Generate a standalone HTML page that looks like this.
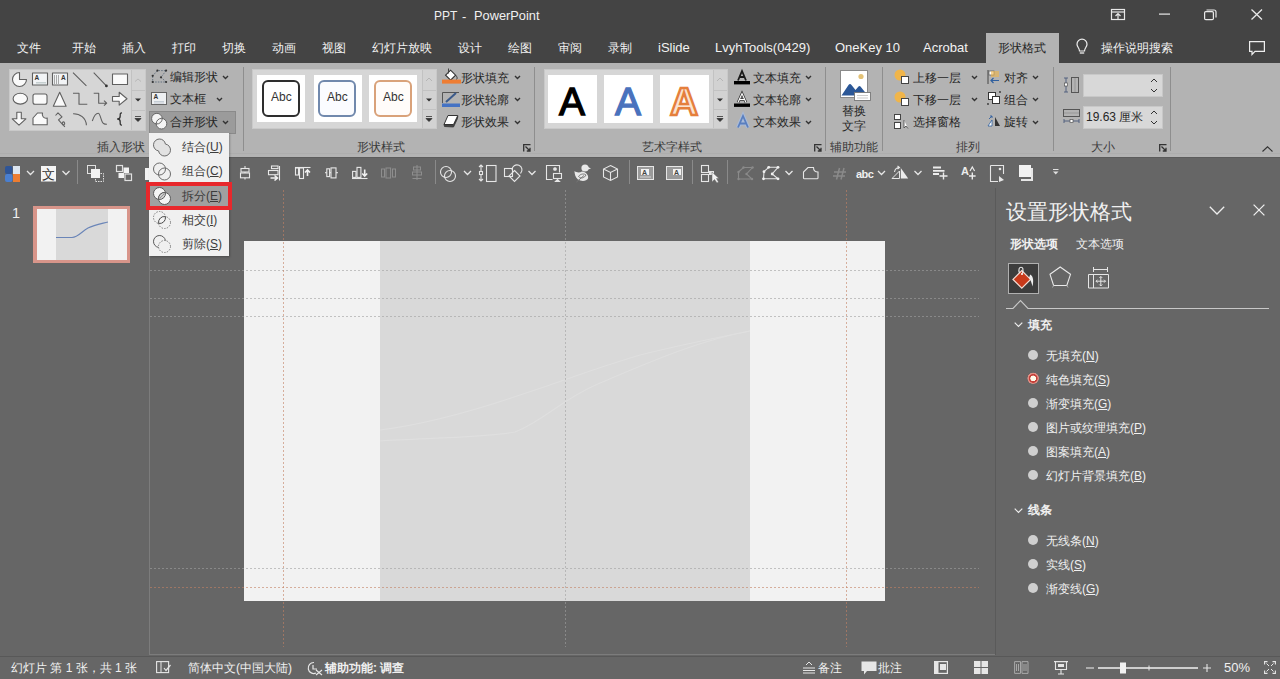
<!DOCTYPE html>
<html><head><meta charset="utf-8">
<style>
*{margin:0;padding:0;box-sizing:border-box}
html,body{width:1280px;height:679px;overflow:hidden}
body{background:#666;font-family:"Liberation Sans",sans-serif;position:relative;color:#262626}
.a{position:absolute}
.t{position:absolute;white-space:nowrap;line-height:1}
svg{position:absolute;overflow:visible}
svg text{font-family:"Liberation Sans",sans-serif}
.tab{position:absolute;top:41px;color:#f2f2f2;font-size:12px;white-space:nowrap;line-height:14px}
.tl{font-size:13px}
.rt{position:absolute;font-size:12px;line-height:12px;color:#262626;white-space:nowrap}
.gl{position:absolute;font-size:12px;line-height:12px;color:#3a3a3a;white-space:nowrap;top:141px}
.sep{position:absolute;width:1px;background:#8e8e8e}
.gal{position:absolute;background:#d6d6d6;border:1px solid #c9c9c9}
.scr{position:absolute;background:#d2d2d2;border-left:1px solid #c2c2c2}
.tile{position:absolute;background:#fff}
.mi{position:absolute;left:182px;font-size:12px;line-height:12px;color:#3c3c3c;white-space:nowrap}
.pt{position:absolute;color:#f0f0f0;font-size:12px;line-height:12px;white-space:nowrap}
.rd{position:absolute;width:10px;height:10px;border-radius:50%;background:#cfcfcf}
.st{position:absolute;top:662px;color:#f0f0f0;font-size:12px;line-height:12px;white-space:nowrap}
</style></head><body>
<!-- title bar + tabs -->
<div class="a" style="left:0;top:0;width:1280px;height:63px;background:#444"></div>
<div class="t" style="left:434px;top:10px;font-size:12px;color:#f0f0f0">PPT</div><div class="t" style="left:462px;top:10px;font-size:13px;color:#f0f0f0">-</div><div class="t" style="left:474px;top:10px;font-size:12.8px;color:#f0f0f0">PowerPoint</div>
<svg style="left:1111px;top:9px" width="14" height="11"><rect x="0.5" y="0.5" width="13" height="10" fill="none" stroke="#e8e8e8" stroke-width="1.2"/><line x1="1" y1="3" x2="13" y2="3" stroke="#e8e8e8" stroke-width="1.2"/><path d="M4.5 7 L7 4.5 L9.5 7 M7 4.5 V10" stroke="#e8e8e8" fill="none" stroke-width="1.2"/></svg>
<svg style="left:1159px;top:13px" width="12" height="2"><rect x="0" y="0.5" width="11" height="1.2" fill="#e8e8e8"/></svg>
<svg style="left:1204px;top:9px" width="13" height="11"><rect x="0.6" y="2.6" width="8.8" height="8" rx="1.2" fill="none" stroke="#e8e8e8" stroke-width="1.2"/><path d="M2.5 1 H10 a2 2 0 0 1 2 2 V8.5" fill="none" stroke="#e8e8e8" stroke-width="1.2"/></svg>
<svg style="left:1251px;top:9px" width="12" height="11"><path d="M0.5 0.5 L11 10.5 M11 0.5 L0.5 10.5" stroke="#e8e8e8" stroke-width="1.3"/></svg>
<div class="tab" style="left:17px">文件</div>
<div class="tab" style="left:72px">开始</div>
<div class="tab" style="left:122px">插入</div>
<div class="tab" style="left:172px">打印</div>
<div class="tab" style="left:222px">切换</div>
<div class="tab" style="left:272px">动画</div>
<div class="tab" style="left:322px">视图</div>
<div class="tab" style="left:372px">幻灯片放映</div>
<div class="tab" style="left:458px">设计</div>
<div class="tab" style="left:508px">绘图</div>
<div class="tab" style="left:558px">审阅</div>
<div class="tab" style="left:608px">录制</div>
<div class="tab tl" style="left:658px">iSlide</div>
<div class="tab tl" style="left:715px">LvyhTools(0429)</div>
<div class="tab tl" style="left:835px">OneKey 10</div>
<div class="tab tl" style="left:923px">Acrobat</div>
<div class="a" style="left:986px;top:33px;width:73px;height:30px;background:#b3b3b3"></div>
<div class="tab" style="left:998px;color:#262626">形状格式</div>
<svg style="left:1076px;top:39px" width="12" height="17"><path d="M3.5 12 C3.5 9 1 8 1 5.2 A5 5 0 0 1 11 5.2 C11 8 8.5 9 8.5 12 Z" fill="none" stroke="#eee" stroke-width="1.2"/><line x1="3.8" y1="14" x2="8.2" y2="14" stroke="#eee" stroke-width="1.3"/></svg>
<div class="tab" style="left:1101px">操作说明搜索</div>
<svg style="left:1249px;top:41px" width="17" height="15"><path d="M0.6 0.6 H15.4 V10.4 H6 L3 13.5 V10.4 H0.6 Z" fill="none" stroke="#eee" stroke-width="1.2"/></svg>
<!-- ribbon -->
<div class="a" style="left:0;top:63px;width:1280px;height:94px;background:#b3b3b3"></div>
<div class="a" style="left:0;top:153px;width:1280px;height:1px;background:#adadad"></div>
<!-- gallery: insert shapes -->
<div class="gal" style="left:9px;top:69px;width:137px;height:62px"></div>
<div class="scr" style="left:131px;top:70px;width:14px;height:60px"></div>
<div class="a" style="left:131px;top:90px;width:14px;height:1px;background:#c2c2c2"></div>
<div class="a" style="left:131px;top:110px;width:14px;height:1px;background:#c2c2c2"></div>
<svg style="left:0;top:0" width="150" height="140">
 <g fill="#fafafa" stroke="#606060" stroke-width="1.1" stroke-linejoin="round">
  <path d="M19.5 79.5 V72.5 A7 7 0 1 0 26.5 79.5 Z"/>
  <rect x="32.5" y="73" width="15" height="12" fill="#f2f4f6"/>
  <rect x="52.5" y="73" width="15" height="12" fill="#f2f4f6"/>
  <path d="M73 72.7 L86.4 85.9 M93.7 72.7 L106.4 85.9" fill="none"/>
  <rect x="112.5" y="74" width="15" height="10.5"/>
  <ellipse cx="20.3" cy="98.7" rx="7.2" ry="5.4"/>
  <rect x="33" y="94" width="14" height="10.3" rx="2"/>
  <path d="M59.7 92.3 L53.3 106.2 L66.1 106.2 Z"/>
  <path d="M73 93.2 H79 V104.2 H87.3" fill="none"/>
  <path d="M93.7 93.2 H98.7 V103.2 H106.5 M104 100.7 L106.7 103.2 L104 105.7" fill="none"/>
  <path d="M112.5 96.5 H119.2 V92.3 L127 98.7 L119.2 105.1 V101.2 H112.5 Z"/>
  <path d="M16.8 112.2 H21.3 V118.8 H25.9 L19 125.2 L12.2 118.8 H16.8 Z"/>
  <path d="M33 118 L37.5 113 H42.5 C41.5 116 44 119 47.2 118 V124.7 H33 Z"/>
  <path d="M55.5 115.5 L58 112.8 L62 116.8 L58.5 119.8 L62.5 124.5 C63.5 125.5 65.3 124.5 64.5 122.7 C63.7 121.2 61.7 122 62.5 123.8 L64.8 126.8" fill="none"/>
  <path d="M73.1 113.7 C80 113.5 86 118 86.4 125.2" fill="none"/>
  <path d="M92.3 121 C94 116 96 113.3 98.2 113.3 C100.5 113.3 101 122 103.5 123.5 C104.5 124.2 105.5 124.3 106.9 124.3" fill="none"/>
  <path d="M122 112.8 C120 112.8 120.2 114 120.2 116 C120.2 118 119.7 119 117.6 119 C119.7 119 120.2 120 120.2 122 C120.2 124 120 125.2 122 125.2" fill="none" stroke="#333" stroke-width="1.3"/>
 </g>
 <circle cx="106.4" cy="85.9" r="1.4" fill="#333"/>
 <g fill="#333" font-family="Liberation Sans" font-size="6.5" font-weight="bold"><text x="34.5" y="80">A</text><text x="61" y="80">A</text></g>
 <path d="M36 82.5 H46 M36 84 H46" stroke="#9aa" stroke-width="0.5"/>
 <path d="M54.5 75 V84 M56.5 75 V84 M58.5 75 V84" stroke="#777" stroke-width="0.6"/>
 <path d="M135 81.5 L138 79 L141 81.5" fill="none" stroke="#b8b8b8" stroke-width="1"/>
 <path d="M135 98.5 H141 L138 101.5 Z" fill="#333"/>
 <path d="M135 116.5 H141 M135 118.5 H141 L138 121.5 Z" fill="#333" stroke="#333" stroke-width="0.8"/>
</svg>
<div class="gl" style="left:97px">插入形状</div>
<!-- edit shape buttons -->
<svg style="left:145px;top:66px" width="24" height="20"><path d="M7.7 9.8 L12.4 4.6 H21.1 L16 11.3 L21.1 16 H7.7 Z" fill="none" stroke="#5a6a7a" stroke-width="0.9" stroke-dasharray="1.5 1.2"/><g fill="#333"><circle cx="7.7" cy="9.8" r="1.1"/><circle cx="12.4" cy="4.6" r="1.1"/><circle cx="21.1" cy="4.6" r="1.1"/><circle cx="16" cy="11.3" r="1.1"/><circle cx="21.1" cy="16" r="1.1"/><circle cx="7.7" cy="16" r="1.1"/></g></svg>
<div class="rt" style="left:170px;top:71px">编辑形状</div>
<svg style="left:222px;top:75px" width="7" height="5"><path d="M1 1 L3.5 3.5 L6 1" fill="none" stroke="#333" stroke-width="1.4"/></svg>
<svg style="left:151px;top:92px" width="16" height="13"><rect x="0.5" y="0.5" width="15" height="12" fill="#eef0f2" stroke="#666"/><text x="2.5" y="7" font-family="Liberation Sans" font-size="6.5" font-weight="bold" fill="#333">A</text><path d="M3 9.5 H13 M3 11 H13" stroke="#a8b4c0" stroke-width="0.6"/></svg>
<div class="rt" style="left:170px;top:93px">文本框</div>
<svg style="left:216px;top:97px" width="7" height="5"><path d="M1 1 L3.5 3.5 L6 1" fill="none" stroke="#333" stroke-width="1.4"/></svg>
<div class="a" style="left:149px;top:111px;width:87px;height:23px;background:#9b9b9b;border:1px solid #8a8a8a"></div>
<svg style="left:150px;top:111px" width="19" height="19"><circle cx="6.9" cy="7.6" r="5.3" fill="#f4f4f4" stroke="#666" stroke-width="1"/><circle cx="11.5" cy="12.7" r="5.3" fill="#f4f4f4" stroke="#666" stroke-width="1"/><path d="M12.2 7.4 A5.3 5.3 0 0 1 6.2 12.9" fill="none" stroke="#666" stroke-width="1"/></svg>
<div class="rt" style="left:170px;top:116px">合并形状</div>
<svg style="left:222px;top:120px" width="7" height="5"><path d="M1 1 L3.5 3.5 L6 1" fill="none" stroke="#333" stroke-width="1.4"/></svg>
<div class="sep" style="left:243px;top:67px;height:84px"></div>
<!-- shape styles -->
<div class="gal" style="left:252px;top:69px;width:185px;height:60px"></div>
<div class="scr" style="left:422px;top:70px;width:14px;height:58px"></div>
<div class="a" style="left:422px;top:90px;width:14px;height:1px;background:#c2c2c2"></div>
<div class="a" style="left:422px;top:109px;width:14px;height:1px;background:#c2c2c2"></div>
<div class="tile" style="left:257px;top:75px;width:48px;height:47px"></div>
<div class="tile" style="left:314px;top:75px;width:48px;height:47px"></div>
<div class="tile" style="left:369px;top:75px;width:48px;height:47px"></div>
<div class="a" style="left:262px;top:80px;width:38px;height:37px;border:2px solid #2e2e2e;border-radius:6px;background:#fff"></div>
<div class="a" style="left:318px;top:80px;width:38px;height:37px;border:2px solid #7189ad;border-radius:6px;background:#fbfcff"></div>
<div class="a" style="left:374px;top:80px;width:38px;height:37px;border:2px solid #d9a27a;border-radius:6px;background:#fffcfa"></div>
<div class="t" style="left:271px;top:91px;font-size:12px;color:#333">Abc</div>
<div class="t" style="left:327px;top:91px;font-size:12px;color:#333">Abc</div>
<div class="t" style="left:383px;top:91px;font-size:12px;color:#333">Abc</div>
<svg style="left:422px;top:69px" width="14" height="60"><path d="M4 12 L7 9 L10 12" fill="none" stroke="#b5b5b5" stroke-width="1"/><path d="M4 29.5 H10 L7 32.5 Z" fill="#333"/><path d="M4 47.5 H10 M4 49.5 H10 L7 52.5 Z" fill="#333" stroke="#333" stroke-width="0.8"/></svg>
<svg style="left:441px;top:68px" width="20" height="18"><path d="M4.6 7.2 L9.6 2.2 L14.6 7.2 L9.6 12.2 Z" fill="#fff" stroke="#333" stroke-width="1.1"/><path d="M7.5 0.5 V5.5" stroke="#444" stroke-width="1"/><path d="M14.6 7.2 C16.3 8.8 16.5 10.5 15.5 11.5" fill="none" stroke="#333"/><rect x="1" y="11.6" width="19" height="4" fill="#ee7d33"/></svg>
<div class="rt" style="left:461px;top:72px">形状填充</div>
<svg style="left:514px;top:75px" width="7" height="5"><path d="M1 1 L3.5 3.5 L6 1" fill="none" stroke="#333" stroke-width="1.4"/></svg>
<svg style="left:441px;top:91px" width="20" height="17"><path d="M1.5 12 V1.5 H18" fill="none" stroke="#555" stroke-width="1"/><path d="M5 11 L15 2" stroke="#3b5a8a" stroke-width="2"/><rect x="1" y="12.5" width="18" height="3.5" fill="#4472c4"/></svg>
<div class="rt" style="left:461px;top:94px">形状轮廓</div>
<svg style="left:514px;top:97px" width="7" height="5"><path d="M1 1 L3.5 3.5 L6 1" fill="none" stroke="#333" stroke-width="1.4"/></svg>
<svg style="left:442px;top:114px" width="18" height="15"><path d="M2 10.5 L2.5 12.5 L11.5 13 L15.5 4.5 L15.8 2 L11.5 10.5 Z" fill="#444" stroke="#333" stroke-width="0.8"/><path d="M2 10.5 L6 1.5 H15.8 L11.5 10.5 Z" fill="#fff" stroke="#333" stroke-width="1"/></svg>
<div class="rt" style="left:461px;top:116px">形状效果</div>
<svg style="left:514px;top:120px" width="7" height="5"><path d="M1 1 L3.5 3.5 L6 1" fill="none" stroke="#333" stroke-width="1.4"/></svg>
<div class="gl" style="left:357px">形状样式</div>
<svg style="left:523px;top:144px" width="8" height="8"><path d="M0.7 7.5 V0.7 H7.5" fill="none" stroke="#333" stroke-width="1.3"/><path d="M2.5 2.5 L7 7 M3.8 7 H7 V3.8" fill="none" stroke="#333" stroke-width="1.3"/></svg>
<div class="sep" style="left:534px;top:67px;height:84px"></div>
<!-- wordart styles -->
<div class="gal" style="left:544px;top:69px;width:184px;height:60px"></div>
<div class="scr" style="left:713px;top:70px;width:14px;height:58px"></div>
<div class="a" style="left:713px;top:90px;width:14px;height:1px;background:#c2c2c2"></div>
<div class="a" style="left:713px;top:109px;width:14px;height:1px;background:#c2c2c2"></div>
<svg style="left:713px;top:69px" width="14" height="60"><path d="M4 12 L7 9 L10 12" fill="none" stroke="#b5b5b5" stroke-width="1"/><path d="M4 29.5 H10 L7 32.5 Z" fill="#333"/><path d="M4 47.5 H10 M4 49.5 H10 L7 52.5 Z" fill="#333" stroke="#333" stroke-width="0.8"/></svg>
<div class="tile" style="left:548px;top:75px;width:49px;height:48px"></div>
<div class="tile" style="left:604px;top:75px;width:49px;height:48px"></div>
<div class="tile" style="left:660px;top:75px;width:49px;height:48px"></div>
<svg style="left:548px;top:75px" width="162" height="48">
 <text x="24" y="39.5" text-anchor="middle" font-family="Liberation Sans" font-size="39" fill="#000" stroke="#000" stroke-width="1.3">A</text>
 <text x="80" y="39.5" text-anchor="middle" font-family="Liberation Sans" font-size="39" fill="#4a72bd" stroke="#4a72bd" stroke-width="1.3">A</text>
 <text x="136" y="39.5" text-anchor="middle" font-family="Liberation Sans" font-size="39" font-weight="bold" fill="#fbe3cf" stroke="#e57f3c" stroke-width="2.4">A</text>
</svg>
<svg style="left:734px;top:70px" width="17" height="15"><path d="M4 10.5 L8 1 L12 10.5 M5.5 7 H10.5" fill="none" stroke="#1a1a1a" stroke-width="1.8"/><rect x="0" y="11" width="16" height="3.4" fill="#000"/></svg>
<div class="rt" style="left:753px;top:72px">文本填充</div>
<svg style="left:805px;top:75px" width="7" height="5"><path d="M1 1 L3.5 3.5 L6 1" fill="none" stroke="#333" stroke-width="1.4"/></svg>
<svg style="left:734px;top:92px" width="17" height="15"><path d="M4 10.5 L8 1.5 L12 10.5 M5.5 7.5 H10.5" fill="none" stroke="#333" stroke-width="2.6"/><path d="M4 10.5 L8 1.5 L12 10.5 M5.5 7.5 H10.5" fill="none" stroke="#fff" stroke-width="1.1"/><rect x="0" y="11.5" width="16" height="3.4" fill="#000"/></svg>
<div class="rt" style="left:753px;top:94px">文本轮廓</div>
<svg style="left:805px;top:97px" width="7" height="5"><path d="M1 1 L3.5 3.5 L6 1" fill="none" stroke="#333" stroke-width="1.4"/></svg>
<svg style="left:735px;top:115px" width="16" height="14"><path d="M3 12.5 L8 1 L13 12.5 M5 8.5 H11" fill="none" stroke="#a9bbd9" stroke-width="4"/><path d="M3 12.5 L8 1 L13 12.5 M5 8.5 H11" fill="none" stroke="#5a7fbf" stroke-width="1.8"/></svg>
<div class="rt" style="left:753px;top:116px">文本效果</div>
<svg style="left:805px;top:120px" width="7" height="5"><path d="M1 1 L3.5 3.5 L6 1" fill="none" stroke="#333" stroke-width="1.4"/></svg>
<div class="gl" style="left:642px">艺术字样式</div>
<svg style="left:814px;top:144px" width="8" height="8"><path d="M0.7 7.5 V0.7 H7.5" fill="none" stroke="#333" stroke-width="1.3"/><path d="M2.5 2.5 L7 7 M3.8 7 H7 V3.8" fill="none" stroke="#333" stroke-width="1.3"/></svg>
<div class="sep" style="left:825px;top:67px;height:84px"></div>
<!-- alt text -->
<svg style="left:840px;top:70px" width="31" height="31"><rect x="0.5" y="0.5" width="27" height="27" fill="#fff" stroke="#8a8a8a"/><circle cx="21" cy="6.5" r="2.6" fill="#e3c277"/><path d="M1.5 25.5 L8.5 15 Q10 13 11.5 15 L15.5 20 L18.5 16.5 Q19.5 15.5 20.5 16.5 L26.5 24 V25.5 Z" fill="#2b5797"/><rect x="14.5" y="22.5" width="16" height="8" fill="#fff" stroke="#777" stroke-width="0.9"/><path d="M17 25.5 H28 M17 28 H28" stroke="#aaa" stroke-width="0.6"/></svg>
<div class="rt" style="left:842px;top:105px">替换</div>
<div class="rt" style="left:842px;top:120px">文字</div>
<div class="gl" style="left:830px">辅助功能</div>
<div class="sep" style="left:882px;top:67px;height:84px"></div>
<!-- arrange -->
<svg style="left:894px;top:69px" width="16" height="16"><circle cx="6" cy="6" r="5.5" fill="#f0b54a"/><rect x="7.5" y="7.5" width="7" height="7" fill="#fff" stroke="#444"/></svg>
<div class="rt" style="left:913px;top:72px">上移一层</div>
<svg style="left:971px;top:75px" width="7" height="5"><path d="M1 1 L3.5 3.5 L6 1" fill="none" stroke="#333" stroke-width="1.4"/></svg>
<svg style="left:894px;top:91px" width="16" height="16"><circle cx="6" cy="6" r="5.5" fill="#f0b54a"/><rect x="7.5" y="7.5" width="7" height="7" fill="#fff" stroke="#444"/></svg>
<div class="rt" style="left:913px;top:94px">下移一层</div>
<svg style="left:971px;top:97px" width="7" height="5"><path d="M1 1 L3.5 3.5 L6 1" fill="none" stroke="#333" stroke-width="1.4"/></svg>
<svg style="left:894px;top:114px" width="16" height="15"><rect x="0.5" y="0.5" width="6" height="5" fill="#fff" stroke="#444"/><rect x="0.5" y="8.5" width="6" height="6" fill="#fff" stroke="#444"/><path d="M10 6 V14 L12 12 L14 14.5" fill="#fff" stroke="#444" stroke-width="0.8"/></svg>
<div class="rt" style="left:913px;top:116px">选择窗格</div>
<svg style="left:987px;top:69px" width="13" height="16"><path d="M1 1 V15" stroke="#444"/><rect x="2" y="2" width="5" height="4" fill="#fff" stroke="#555" stroke-width="0.7"/><rect x="4" y="2" width="8" height="6" fill="#f0b54a" opacity="0.6"/><path d="M12 11.5 H4 M6.5 9 L4 11.5 L6.5 14" fill="none" stroke="#2f5f9e" stroke-width="1.2"/></svg>
<div class="rt" style="left:1004px;top:72px">对齐</div>
<svg style="left:1032px;top:75px" width="7" height="5"><path d="M1 1 L3.5 3.5 L6 1" fill="none" stroke="#333" stroke-width="1.4"/></svg>
<svg style="left:987px;top:91px" width="14" height="14"><rect x="1.5" y="1.5" width="7" height="7" fill="#fff" stroke="#333"/><rect x="5.5" y="5.5" width="7" height="7" fill="#fff" stroke="#333"/><g fill="#333"><circle cx="1" cy="13" r="0.9"/><circle cx="13" cy="1" r="0.9"/></g></svg>
<div class="rt" style="left:1004px;top:94px">组合</div>
<svg style="left:1032px;top:97px" width="7" height="5"><path d="M1 1 L3.5 3.5 L6 1" fill="none" stroke="#333" stroke-width="1.4"/></svg>
<svg style="left:987px;top:115px" width="14" height="12"><path d="M1 11 L5 5 V11 Z" fill="#fff" stroke="#2f5f9e" stroke-width="0.8"/><path d="M8 11 L8 2 L13 11 Z" fill="#333"/><path d="M2 4 L5 1 M3 1 H5 V3" fill="none" stroke="#2f5f9e" stroke-width="0.9"/></svg>
<div class="rt" style="left:1004px;top:116px">旋转</div>
<svg style="left:1032px;top:120px" width="7" height="5"><path d="M1 1 L3.5 3.5 L6 1" fill="none" stroke="#333" stroke-width="1.4"/></svg>
<div class="gl" style="left:956px">排列</div>
<div class="sep" style="left:1053px;top:67px;height:84px"></div>
<!-- size -->
<svg style="left:1063px;top:77px" width="17" height="16"><path d="M3 1 V15 M1 1 H5 M1 15 H5" stroke="#4a5a7a" stroke-width="0.9"/><rect x="1.5" y="6" width="3" height="3" fill="#fff" stroke="#555" stroke-width="0.7"/><rect x="8.5" y="0.5" width="7" height="15" fill="none" stroke="#555"/><path d="M12 1 V15" stroke="#888" stroke-width="0.6"/></svg>
<div class="a" style="left:1083px;top:74px;width:80px;height:23px;background:#d8d8d8;border:1px solid #c8c8c8"></div>
<svg style="left:1150px;top:78px" width="8" height="15"><path d="M1 4 L4 1 L7 4 M1 11 L4 14 L7 11" fill="none" stroke="#333" stroke-width="1"/></svg>
<svg style="left:1063px;top:109px" width="17" height="15"><rect x="0.5" y="0.5" width="16" height="7" fill="none" stroke="#555"/><path d="M1 4 H16" stroke="#888" stroke-width="0.6"/><path d="M1 12 H16 M1 10 V14 M16 10 V14" stroke="#4a5a7a" stroke-width="0.9"/><rect x="7" y="10.5" width="3" height="3" fill="#fff" stroke="#555" stroke-width="0.7"/></svg>
<div class="a" style="left:1083px;top:106px;width:80px;height:23px;background:#d8d8d8;border:1px solid #c8c8c8"></div>
<div class="t" style="left:1086px;top:111px;font-size:12px;color:#262626">19.63 厘米</div>
<svg style="left:1150px;top:110px" width="8" height="15"><path d="M1 4 L4 1 L7 4 M1 11 L4 14 L7 11" fill="none" stroke="#333" stroke-width="1"/></svg>
<div class="gl" style="left:1091px">大小</div>
<svg style="left:1159px;top:144px" width="8" height="8"><path d="M0.7 7.5 V0.7 H7.5" fill="none" stroke="#333" stroke-width="1.3"/><path d="M2.5 2.5 L7 7 M3.8 7 H7 V3.8" fill="none" stroke="#333" stroke-width="1.3"/></svg>
<div class="sep" style="left:1170px;top:67px;height:84px"></div>
<svg style="left:1262px;top:146px" width="11" height="6"><path d="M0.5 5.5 L5.5 0.8 L10.5 5.5" fill="none" stroke="#333" stroke-width="1.1"/></svg>
<!-- quick toolbar -->
<div class="a" style="left:0;top:157px;width:1280px;height:1px;background:#5c5c5c"></div>
<svg style="left:0;top:157px" width="1280" height="31">
 <g>
  <rect x="5" y="9" width="7.5" height="8" rx="2" fill="#2f5597"/><rect x="5" y="17" width="7.5" height="8" rx="2" fill="#4a7fd0"/>
  <rect x="13" y="9" width="7" height="8" fill="#dde6f0"/><rect x="13" y="17" width="7" height="8" fill="#ed7d31"/>
 </g>
 <path d="M27 14 L30.5 17.5 L34 14" fill="none" stroke="#e6e6e6" stroke-width="1.3"/>
 <rect x="41" y="9" width="15" height="15.5" fill="#f5f5f5"/>
 <text x="48.5" y="22" text-anchor="middle" font-size="13" fill="#333">文</text>
 <path d="M62.5 14 L66 17.5 L69.5 14" fill="none" stroke="#e6e6e6" stroke-width="1.3"/>
 <rect x="77" y="3" width="1" height="24" fill="#8a8a8a"/>
 <g fill="none" stroke="#e0e0e0" stroke-width="1">
  <rect x="87.5" y="8.5" width="8" height="8"/><rect x="95.5" y="16.5" width="8" height="8" stroke-dasharray="1.5 1"/>
 </g>
 <rect x="91" y="12" width="9" height="9" fill="#f2f2f2"/>
 <g fill="none" stroke="#e0e0e0" stroke-width="1.2"><rect x="116.5" y="8.5" width="6" height="6"/><rect x="125" y="17" width="6.5" height="6.5"/></g>
 <rect x="123.5" y="10.5" width="5.5" height="5.5" fill="#f2f2f2"/><rect x="118.5" y="16" width="5.5" height="5" fill="#f2f2f2"/>
 <rect x="145" y="11" width="5" height="12" fill="#f2f2f2"/>
 <g fill="#666" stroke="#e8e8e8" stroke-width="1.1">
  <path d="M245 9 V22.5"/><rect x="241" y="11.5" width="8" height="3.5"/><rect x="240.5" y="16" width="9" height="4.8"/>
  <rect x="271.5" y="9" width="6.5" height="2.6"/><rect x="268.5" y="13.5" width="9.5" height="4.2"/><path d="M279.5 9 V23.5"/>
  <path d="M295 10.5 H310.5"/><rect x="295.5" y="11" width="3" height="7"/><rect x="299.5" y="11" width="4" height="10.5"/>
  <path d="M325 15.7 H338"/><rect x="326.8" y="11.8" width="2.8" height="7.8"/><rect x="331" y="10.9" width="5" height="10"/>
  <path d="M352 21.5 H367.5"/><rect x="352.6" y="14.4" width="3.4" height="6"/><rect x="357" y="10.4" width="3.9" height="10"/>
 </g>
 <path d="M270.5 21 H277 M274.5 18.5 L277.5 21 L274.5 23.5" fill="none" stroke="#f0f0f0" stroke-width="1.6"/>
 <path d="M307.5 19 V13 M305 15.5 L307.5 13 L310 15.5" fill="none" stroke="#f0f0f0" stroke-width="1.6"/>
 <path d="M364.7 12.5 V19 M362.2 16.5 L364.7 19 L367.2 16.5" fill="none" stroke="#f0f0f0" stroke-width="1.6"/>
 <g fill="none" stroke="#8e8e8e" stroke-width="1">
  <rect x="381.5" y="12" width="3" height="8"/><rect x="386" y="11" width="4.6" height="10"/><rect x="392.5" y="12" width="3" height="8"/>
  <path d="M417 8 V23"/><rect x="413.5" y="10" width="7" height="3"/><rect x="412.5" y="15" width="9" height="3"/><path d="M412.5 21.5 H421.5"/>
 </g>
 <rect x="435" y="3" width="1" height="24" fill="#8a8a8a"/>
 <g fill="none" stroke="#e6e6e6" stroke-width="1.1"><circle cx="446" cy="15" r="5.5"/><circle cx="450" cy="19" r="5.5"/></g>
 <path d="M464 14 L467.5 17.5 L471 14" fill="none" stroke="#e6e6e6" stroke-width="1.3"/>
 <g fill="none" stroke="#e6e6e6" stroke-width="1.1">
  <path d="M481 8 V24 M479 10 L481 8 L483 10 M479 22 L481 24 L483 22"/><rect x="486.5" y="8.5" width="9.5" height="16"/><rect x="479.5" y="14.5" width="3" height="3" fill="#666"/>
  <rect x="504.5" y="11.5" width="8" height="8"/><path d="M512 13 A5 5 0 1 1 520.5 16.5"/><path d="M514.5 13.5 L520 19 L514.5 24.5 L509 19 Z"/>
 </g>
 <path d="M528.5 14 L532 17.5 L535.5 14" fill="none" stroke="#e6e6e6" stroke-width="1.3"/>
 <g fill="none" stroke="#e6e6e6" stroke-width="1.1">
  <path d="M559.5 15.5 V8.5 H546.5 V22.5 H552.5"/><rect x="553.5" y="16.5" width="8" height="5"/><circle cx="555" cy="12" r="1.3" fill="#e6e6e6"/><path d="M555.5 24.5 L557.5 22.5 L559.5 24.5 Z" fill="#e6e6e6"/>
 </g>
 <g fill="#e8e8e8"><circle cx="585" cy="11" r="3.6"/><path d="M588 10 L591 11.5 L588 12.5 Z"/><path d="M574.5 14 C577 16 580 15.5 582 14.5 C586 15 589 18 588 21.5 C586.5 24.5 581 24.5 578 22.5 C575.5 20.5 574.5 17 574.5 14 Z"/></g>
 <path d="M578.5 19.5 C580.5 16.5 584.5 16.5 586 18 C584.5 21 581 22 578.5 19.5 Z M576.5 25 L584 18.5" fill="none" stroke="#777" stroke-width="1"/>
 <g fill="none" stroke="#e6e6e6" stroke-width="1.1"><path d="M610.5 8.5 L617.5 12 V20 L610.5 23.5 L603.5 20 V12 Z M603.5 12 L610.5 15.5 L617.5 12 M610.5 15.5 V23.5"/></g>
 <rect x="629" y="3" width="1" height="24" fill="#8a8a8a"/>
 <g><rect x="637.5" y="9.5" width="16" height="13" fill="#9a9a9a" stroke="#e6e6e6"/><rect x="641" y="12" width="8" height="6" fill="#f2f2f2"/><text x="642" y="18" font-size="7" font-weight="bold" fill="#444">A</text><path d="M640 20 H651" stroke="#e6e6e6" stroke-width="0.8"/></g>
 <g><rect x="666.5" y="9.5" width="16" height="13" fill="#9a9a9a" stroke="#e6e6e6"/><rect x="673" y="12" width="8" height="6" fill="#f2f2f2"/><text x="674" y="18" font-size="7" font-weight="bold" fill="#444">A</text></g>
 <rect x="692" y="3" width="1" height="24" fill="#8a8a8a"/>
 <g fill="none" stroke="#e6e6e6" stroke-width="1.1"><rect x="701.5" y="8.5" width="7" height="7"/><rect x="701.5" y="17.5" width="7" height="7"/></g>
 <rect x="709" y="14" width="5" height="4" fill="#e6e6e6"/>
 <path d="M712 15 V25 L714.5 22.5 L717 26 L718.5 25 L716.5 21.5 H719 Z" fill="#f2f2f2" stroke="#666" stroke-width="0.5"/>
 <rect x="727" y="3" width="1" height="24" fill="#8a8a8a"/>
 <g fill="none" stroke="#8a8a8a" stroke-width="1.1"><path d="M738.5 15 L743.5 10.5 H752.5 L746.5 17 L752 22 H738.5 Z"/></g><g fill="#8a8a8a"><circle cx="738.5" cy="15" r="1.2"/><circle cx="743.5" cy="10.5" r="1.2"/><circle cx="752.5" cy="10.5" r="1.2"/><circle cx="746.5" cy="17" r="1.2"/><circle cx="752" cy="22" r="1.2"/><circle cx="738.5" cy="22" r="1.2"/></g>
 <g fill="none" stroke="#e6e6e6" stroke-width="1.1"><path d="M764 14.7 L768.7 10.3 H778 L772.2 17 L778 21.8 H763.5 Z"/></g>
 <g fill="#f0f0f0"><circle cx="764" cy="14.7" r="1.4"/><circle cx="768.7" cy="10.3" r="1.4"/><circle cx="778" cy="10.3" r="1.4"/><circle cx="772.2" cy="17" r="1.4"/><circle cx="778" cy="21.8" r="1.4"/><circle cx="763.5" cy="21.8" r="1.4"/></g>
 <path d="M785.5 14 L789 17.5 L792.5 14" fill="none" stroke="#e6e6e6" stroke-width="1.3"/>
 <path d="M803.5 21 V15 L808 10.5 H813.5 C813.5 13.5 815.5 15 818 15 V21 C818 21.5 817.5 21.8 817 21.8 H804.5 C804 21.8 803.5 21.5 803.5 21 Z" fill="none" stroke="#e6e6e6" stroke-width="1.1"/>
 <path d="M839.5 11 L836.5 22.5 M844 11 L841 22.5 M834 15 H846 M833 19 H845" stroke="#8a8a8a" stroke-width="1.5"/>
 <text x="856" y="20.5" font-size="11" font-weight="bold" fill="#f0f0f0" letter-spacing="-0.6">abc</text>
 <path d="M878 14 L881.5 17.5 L885 14" fill="none" stroke="#e6e6e6" stroke-width="1.3"/>
 <path d="M892 21.5 H899.5 V14 Z" fill="none" stroke="#e6e6e6" stroke-width="1"/><path d="M900.8 21.5 H908.2 L900.8 11 Z" fill="#ececec"/><path d="M894.5 15 C895 12 897 10.5 899.5 10.5 M897.5 9 L899.5 10.5 L897.5 12" stroke="#e6e6e6" fill="none" stroke-width="1.1"/>
 <path d="M914.5 14 L918 17.5 L921.5 14" fill="none" stroke="#e6e6e6" stroke-width="1.3"/>
 <g stroke="#ececec" stroke-width="1.8"><path d="M933 10.5 H941 M933 13.8 H944.5 M933 17 H939"/></g><path d="M943.5 15.5 V22.5 M939.5 19 H947.5" stroke="#ececec" stroke-width="1.4"/>
 <text x="961" y="18" font-size="11" font-weight="bold" fill="#ececec">A</text><path d="M970 14 L972.3 10 L974.6 14" fill="none" stroke="#ececec" stroke-width="1.2"/><path d="M972.3 15.5 V22.5 M969 19 H975.6" stroke="#ececec" stroke-width="1.4"/>
 <path d="M990.5 8.5 H1003.5 V17 M990.5 8.5 V24.5 H998" fill="none" stroke="#e6e6e6" stroke-width="1.1"/><path d="M999 19 L1004 23 L999 25 Z" fill="#e6e6e6"/><circle cx="1000" cy="12" r="1.3" fill="#e6e6e6"/>
 <rect x="1019" y="8" width="12" height="12" fill="#f2f2f2"/><path d="M1032 11 V23 H1021" fill="none" stroke="#e6e6e6" stroke-width="2"/>
 <path d="M1053 12.5 H1058.5" stroke="#e0e0e0" stroke-width="1"/><path d="M1053 14.5 H1058.5 L1055.75 17.5 Z" fill="#e0e0e0"/>
</svg>
<!-- main area -->
<div class="t" style="left:12px;top:206px;font-size:14.5px;color:#f0f0f0">1</div>
<div class="a" style="left:33px;top:206px;width:97px;height:57px;background:#d8958a"></div>
<div class="a" style="left:37px;top:209px;width:90px;height:51px;background:#f2f2f2"></div>
<div class="a" style="left:56px;top:209px;width:52px;height:51px;background:#d9d9d9"></div>
<svg style="left:0;top:0" width="130" height="260"><path d="M56 237.5 H72 C78 237.5 82 231 88 228 C94 225 100 224 108 222" fill="none" stroke="#6a85b8" stroke-width="1.1"/></svg>
<div class="a" style="left:149px;top:188px;width:1px;height:467px;background:#7c7c7c"></div>
<div class="a" style="left:150px;top:654px;width:845px;height:1px;background:#7c7c7c"></div>
<div class="a" style="left:244px;top:241px;width:641px;height:360px;background:#f2f2f2"></div>
<div class="a" style="left:380px;top:241px;width:370px;height:360px;background:#d9d9d9"></div>
<svg style="left:0;top:0" width="1000" height="660">
 <g fill="none" stroke="#e8e8e8" stroke-width="1.2" opacity="0.4">
  <path d="M380 441 C430 438 490 437 515 432 C545 420 560 400 600 383 C650 362 700 340 750 331"/>
  <path d="M380 430 C420 425 470 412 520 395 C560 382 590 370 640 355 C680 345 715 338 750 331"/>
 </g>
 <g stroke-width="1" stroke-dasharray="2 2">
  <path d="M150 270.5 H979 M150 298.5 H979 M150 316.5 H979 M150 568.5 H979" stroke="rgba(160,160,160,0.6)"/>
  <path d="M150 587.5 H979" stroke="rgba(195,128,98,0.6)"/>
  <path d="M283.5 190 V647 M846.5 190 V647" stroke="rgba(195,128,98,0.6)"/>
  <path d="M565.5 190 V647" stroke="rgba(160,160,160,0.6)"/>
 </g>
</svg>
<div class="a" style="left:995px;top:188px;width:1px;height:467px;background:#5a5a5a"></div>
<!-- right pane -->
<div class="t" style="left:1006px;top:201px;font-size:21px;color:#f0f0f0">设置形状格式</div>
<svg style="left:1209px;top:206px" width="16" height="9"><path d="M0.8 0.8 L8 8 L15.2 0.8" fill="none" stroke="#eee" stroke-width="1.3"/></svg>
<svg style="left:1253px;top:204px" width="12" height="12"><path d="M0.6 0.6 L11.4 11.4 M11.4 0.6 L0.6 11.4" stroke="#eee" stroke-width="1.3"/></svg>
<div class="pt" style="left:1010px;top:238px;font-weight:bold">形状选项</div>
<div class="pt" style="left:1076px;top:238px">文本选项</div>
<div class="a" style="left:1008px;top:263px;width:31px;height:31px;background:#3d3d3d;border:1px solid #b0b0b0"></div>
<svg style="left:1008px;top:263px" width="31" height="31"><path d="M5 16.4 L13.8 7.6 L22.6 16.4 L13.8 25.2 Z" fill="#c8391a" stroke="#f4dcd4" stroke-width="1.2"/><path d="M11.5 10 C10 6 11.5 4.2 13 4.2 C15 4.2 15.5 6 14.5 10.5" fill="none" stroke="#eee" stroke-width="1.1"/><circle cx="14" cy="11" r="1.1" fill="#f2f2f2"/><path d="M22.2 11.5 C25 13 26 17 24.5 23.5 C23.5 20 23 17 21 15 Z" fill="#eee"/></svg>
<svg style="left:1049px;top:266px" width="23" height="23"><path d="M11.2 1 L21.5 8.3 L17.8 19.5 H4.6 L1 8.3 Z" fill="none" stroke="#eaeaea" stroke-width="1.1"/><path d="M4.6 19.5 L3.5 21.5 M17.8 19.5 L19 21.5" stroke="#aaa" stroke-width="1"/></svg>
<svg style="left:1087px;top:266px" width="23" height="23"><path d="M6.5 3.5 H20.5 M6.5 1 V6 M20.5 1 V6" stroke="#e6e6e6" stroke-width="1"/><path d="M1.5 8.5 H21.5 V22 H1.5 Z M6.5 8.5 V22" fill="none" stroke="#e6e6e6" stroke-width="1"/><path d="M13.8 10.5 V20 M9 15.2 H18.5" stroke="#e6e6e6" stroke-width="1"/><path d="M12.3 12 L13.8 10.5 L15.3 12 M12.3 18.5 L13.8 20 L15.3 18.5 M10.5 13.7 L9 15.2 L10.5 16.7 M17 13.7 L18.5 15.2 L17 16.7" fill="none" stroke="#e6e6e6" stroke-width="0.9"/></svg>
<svg style="left:1005px;top:298px" width="265" height="12"><path d="M1 10.5 H8 L15.5 2.5 L23 10.5 H264" fill="none" stroke="#c8c8c8" stroke-width="1.1"/></svg>
<svg style="left:1014px;top:322px" width="9" height="6"><path d="M0.7 0.7 L4.5 4.5 L8.3 0.7" fill="none" stroke="#eee" stroke-width="1.2"/></svg>
<div class="pt" style="left:1028px;top:319px;font-weight:bold">填充</div>
<div class="rd" style="left:1028px;top:350px"></div>
<div class="pt" style="left:1046px;top:350px">无填充(<u>N</u>)</div>
<div class="a" style="left:1027px;top:372px;width:12px;height:12px;border-radius:50%;background:radial-gradient(circle at 6.2px 6.4px,#fffbea 0,#fffbea 2.6px,#c4403a 3.1px,#c4403a 4.1px,#df8e84 4.6px,#df8e84 5.5px,rgba(102,102,102,0) 6px)"></div>
<div class="pt" style="left:1046px;top:374px">纯色填充(<u>S</u>)</div>
<div class="rd" style="left:1028px;top:398px"></div>
<div class="pt" style="left:1046px;top:398px">渐变填充(<u>G</u>)</div>
<div class="rd" style="left:1028px;top:422px"></div>
<div class="pt" style="left:1046px;top:422px">图片或纹理填充(<u>P</u>)</div>
<div class="rd" style="left:1028px;top:446px"></div>
<div class="pt" style="left:1046px;top:446px">图案填充(<u>A</u>)</div>
<div class="rd" style="left:1028px;top:470px"></div>
<div class="pt" style="left:1046px;top:470px">幻灯片背景填充(<u>B</u>)</div>
<svg style="left:1014px;top:508px" width="9" height="6"><path d="M0.7 0.7 L4.5 4.5 L8.3 0.7" fill="none" stroke="#eee" stroke-width="1.2"/></svg>
<div class="pt" style="left:1028px;top:504px;font-weight:bold">线条</div>
<div class="rd" style="left:1028px;top:535px"></div>
<div class="pt" style="left:1046px;top:535px">无线条(<u>N</u>)</div>
<div class="rd" style="left:1028px;top:559px"></div>
<div class="pt" style="left:1046px;top:559px">实线(<u>S</u>)</div>
<div class="rd" style="left:1028px;top:583px"></div>
<div class="pt" style="left:1046px;top:583px">渐变线(<u>G</u>)</div>
<!-- status bar -->
<div class="a" style="left:0;top:656px;width:1280px;height:1px;background:#585858"></div>
<div class="st" style="left:11px">幻灯片 第 1 张，共 1 张</div>
<svg style="left:156px;top:661px" width="16" height="14"><rect x="0.6" y="0.6" width="12" height="11" fill="none" stroke="#e6e6e6" stroke-width="1.1"/><path d="M5 1 V12" stroke="#e6e6e6"/><path d="M8 7 L10 9.5 L14.5 4" fill="none" stroke="#e6e6e6" stroke-width="1.2"/></svg>
<div class="st" style="left:188px">简体中文(中国大陆)</div>
<svg style="left:308px;top:661px" width="16" height="15"><path d="M6 1.5 A5.5 5.5 0 1 0 8 12" fill="none" stroke="#e6e6e6" stroke-width="1.2"/><path d="M5 4 V8 H9 M8 9 L14 14 M14 9 L8 14" fill="none" stroke="#e6e6e6" stroke-width="1.2"/></svg>
<div class="st" style="left:325px;font-weight:bold">辅助功能: 调查</div>
<svg style="left:803px;top:661px" width="12" height="13"><path d="M3 4 L6 1 L9 4" fill="none" stroke="#e6e6e6" stroke-width="1"/><path d="M0 7 H12 M0 9.5 H12 M0 12 H12" stroke="#e6e6e6" stroke-width="1"/></svg>
<div class="st" style="left:818px">备注</div>
<svg style="left:861px;top:661px" width="16" height="14"><path d="M0.5 0.5 H15.5 V10 H6 L3 13.5 V10 H0.5 Z" fill="#e6e6e6"/></svg>
<div class="st" style="left:878px">批注</div>
<svg style="left:934px;top:661px" width="14" height="13"><rect x="0.6" y="0.6" width="12.8" height="11.8" fill="none" stroke="#e6e6e6" stroke-width="1.2"/><rect x="1" y="1" width="3.5" height="11" fill="#e6e6e6"/><rect x="6" y="3" width="6" height="6" fill="#e6e6e6"/></svg>
<svg style="left:974px;top:661px" width="15" height="13"><rect x="0" y="0" width="6.5" height="6" fill="#e6e6e6"/><rect x="7.5" y="0" width="6.5" height="6" fill="#e6e6e6"/><rect x="0" y="7" width="6.5" height="6" fill="#e6e6e6"/><rect x="7.5" y="7" width="6.5" height="6" fill="#e6e6e6"/></svg>
<svg style="left:1014px;top:661px" width="15" height="13"><path d="M0.6 0.6 H6.5 V12.4 H0.6 Z M8 0.6 H14 V12.4 H8 Z M2.5 3 V10 M4.5 3 V10 M10 3 V10 M12 3 V10" fill="none" stroke="#a8a8a8" stroke-width="1"/></svg>
<svg style="left:1054px;top:661px" width="14" height="14"><path d="M0 0.6 H14 M1.5 1 V8.5 H12.5 V1 M7 8.5 V13 M4 13 H10" fill="none" stroke="#e6e6e6" stroke-width="1.1"/><rect x="4" y="3" width="6" height="3" fill="#e6e6e6"/></svg>
<svg style="left:1085px;top:661px" width="130" height="14"><path d="M1 7 H9" stroke="#e6e6e6" stroke-width="1.1"/><path d="M13 7 H113" stroke="#f2f2f2" stroke-width="1.4"/><rect x="35" y="1.5" width="6" height="11" fill="#f2f2f2"/><path d="M64 4.5 V9.5" stroke="#e6e6e6"/><path d="M118 7 H126 M122 3 V11" stroke="#e6e6e6" stroke-width="1.1"/></svg>
<div class="st" style="left:1224px;font-size:13px">50%</div>
<svg style="left:1264px;top:661px" width="12" height="13"><path d="M0.6 3.5 V0.6 H3.5 M8.5 0.6 H11.4 V3.5 M11.4 9.5 V12.4 H8.5 M3.5 12.4 H0.6 V9.5" fill="none" stroke="#e6e6e6" stroke-width="1.1"/><path d="M2.5 2.5 L5 5 M9.5 2.5 L7 5 M2.5 10.5 L5 8 M9.5 10.5 L7 8" stroke="#e6e6e6" stroke-width="1"/></svg>
<!-- dropdown menu -->
<div class="a" style="left:149px;top:133px;width:80px;height:123px;background:#f0f0f0;box-shadow:1px 1px 2px rgba(0,0,0,0.25)"></div>
<div class="a" style="left:146px;top:182px;width:86px;height:28px;border:4px solid #e8282c;background:#a0a0a0"></div>
<svg style="left:149px;top:133px" width="30" height="123">
 <g transform="translate(13,14.5)"><path d="M3.43 -3.43 A6 6 0 1 0 -3.43 3.43 A6 6 0 1 0 3.43 -3.43 Z" fill="#e2e2e2" stroke="#6a6a6a" stroke-width="1"/></g>
 <g transform="translate(13,38.5)" fill="none" stroke="#6a6a6a" stroke-width="1"><circle cx="-2.5" cy="-2.5" r="6"/><circle cx="2.5" cy="2.5" r="6"/></g>
 <g transform="translate(13,63)" stroke="#5a5a5a" stroke-width="1"><circle cx="-2.5" cy="-2.5" r="6" fill="#f4f4f4"/><circle cx="2.5" cy="2.5" r="6" fill="#f4f4f4"/><path d="M3.43 -3.43 A6 6 0 0 1 -3.43 3.43 A6 6 0 0 1 3.43 -3.43 Z" fill="#cfcfcf"/><path d="M-2 2 L2 -2" stroke="#888" stroke-width="0.8"/></g>
 <g transform="translate(13,87)"><g fill="none" stroke="#7a7a7a" stroke-width="1" stroke-dasharray="1.4 1.3"><circle cx="-2.5" cy="-2.5" r="6"/><circle cx="2.5" cy="2.5" r="6"/></g><path d="M3.43 -3.43 A6 6 0 0 1 -3.43 3.43 A6 6 0 0 1 3.43 -3.43 Z" fill="#f4f4f4" stroke="#555" stroke-width="1"/></g>
 <g transform="translate(13,111)"><path d="M3.43 -3.43 A6 6 0 1 0 -3.43 3.43" fill="none" stroke="#5a5a5a" stroke-width="1"/><circle cx="2.5" cy="2.5" r="6" fill="none" stroke="#7a7a7a" stroke-width="1" stroke-dasharray="1.4 1.3"/></g>
</svg>
<div class="mi" style="top:141px">结合(<u>U</u>)</div>
<div class="mi" style="top:165px">组合(<u>C</u>)</div>
<div class="mi" style="top:190px">拆分(<u>E</u>)</div>
<div class="mi" style="top:214px">相交(<u>I</u>)</div>
<div class="mi" style="top:238px">剪除(<u>S</u>)</div>
</body></html>
